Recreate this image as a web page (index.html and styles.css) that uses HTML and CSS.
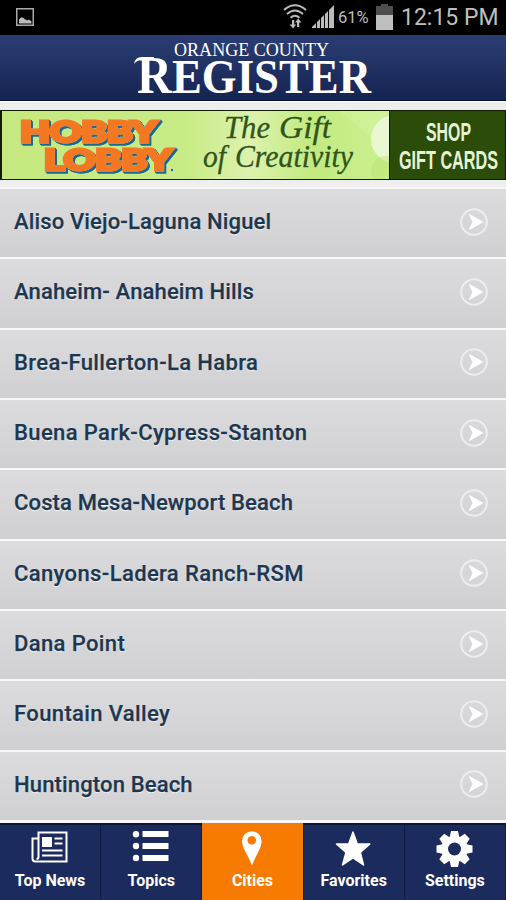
FILE: index.html
```
<!DOCTYPE html>
<html lang="en">
<head>
  <meta charset="UTF-8">
  <title>Orange County Register</title>
  <link rel="stylesheet" href="styles.css">
</head>
<body>
  <div class="status">
    <svg class="photo" width="18" height="18" viewBox="0 0 18 18">
      <rect x=".75" y=".75" width="16.5" height="16.5" fill="none" stroke="#aaa" stroke-width="1.5"/>
      <path d="M3 15.500v-4l2-2h2l2 2h1l1 1 2-1 2.500 2v2z" fill="#bbb"/>
    </svg>
    <svg class="wifi" width="24" height="26" viewBox="0 0 24 26">
      <path d="M1 6q11-9.500 22 0M4 10q8-7 16 0M7.500 13.700q4.500-4 9 0" fill="none" stroke="#bbb" stroke-width="2"/>
      <path d="M9 16h2.200v4.500h2l-3.200 4-3.500-4H9zM14 23v-4.500h-2l3.200-4 3.300 4h-2.300V23z" fill="#bbb"/>
    </svg>
    <svg class="signal" width="22" height="23" viewBox="0 0 22 23">
      <path d="M0 23v-1l4-4v5zM5 23v-6l3-3v9zM9 23v-10l3-3v13zM13 23V9l3-3v17zM17 23V5l5-5v23z" fill="#bbb"/>
    </svg>
    <span class="percent">61%</span>
    <svg class="battery" width="17" height="26" viewBox="0 0 17 26">
      <path d="M0 2h5V0h7v2h5v10H0z" fill="#4d4d4d"/>
      <path d="M0 11h17v15H0z" fill="#bebebe"/>
    </svg>
    <span class="time">12:15 PM</span>
  </div>

  <header class="header">
    <svg width="506" height="65" viewBox="0 0 506 65">
      <g class="logo">
        <text x="174" y="20.500" font-size="19" textLength="155" lengthAdjust="spacingAndGlyphs">ORANGE COUNTY</text>
        <text x="137" y="58" font-size="49" font-weight="bold" textLength="234" lengthAdjust="spacingAndGlyphs"><tspan font-size="53">R</tspan>EGISTER</text>
        <path d="M134 29q1-7 8-7h12v3h-12q-5 0-8 4z"/>
      </g>
    </svg>
  </header>

  <div class="ad">
    <svg width="506" height="70" viewBox="0 0 506 70">
      <defs>
        <linearGradient id="lime">
          <stop offset="0" stop-color="#c5e97e"/>
          <stop offset=".48" stop-color="#c9eb87"/>
          <stop offset=".64" stop-color="#dcf2ae"/>
          <stop offset=".8" stop-color="#c3ea80"/>
          <stop offset="1" stop-color="#cbf090"/>
        </linearGradient>
        <clipPath id="left"><path d="M2 1h387v68H2z"/></clipPath>
      </defs>
      <path d="M0 0h506v70H0z" fill="#111c05"/>
      <g clip-path="url(#left)">
        <path d="M2 1h387v68H2z" fill="url(#lime)"/>
        <path d="M340 1l49 42V1z" fill="#d5f3a2" opacity=".5"/>
        <circle cx="395" cy="29" r="24" fill="#e9f8d1"/>
        <circle cx="386" cy="61" r="15" fill="#b7e26c" opacity=".4"/>
      </g>
      <path d="M390 1h115v68H390z" fill="#2c4d0a"/>
      <g class="hobby">
        <text x="20" y="32" textLength="137" lengthAdjust="spacingAndGlyphs">HOBBY</text>
        <text x="44" y="59.500" textLength="128" lengthAdjust="spacingAndGlyphs">LOBBY</text>
      </g>
      <path d="M171 59h2v2h-2z" fill="#176a94"/>
      <g class="script">
        <text x="224" y="28" textLength="46" lengthAdjust="spacingAndGlyphs">The</text>
        <text x="279" y="28" textLength="52" lengthAdjust="spacingAndGlyphs">Gift</text>
        <text x="203" y="57" textLength="23" lengthAdjust="spacingAndGlyphs">of</text>
        <text x="235" y="57" textLength="118" lengthAdjust="spacingAndGlyphs">Creativity</text>
      </g>
      <g class="shop">
        <text x="426" y="31" textLength="45" lengthAdjust="spacingAndGlyphs">SHOP</text>
        <text x="399" y="59" textLength="99" lengthAdjust="spacingAndGlyphs">GIFT CARDS</text>
      </g>
    </svg>
  </div>

  <svg class="defs" width="0" height="0">
    <symbol id="arrow" viewBox="0 0 28 28">
      <circle cx="14" cy="14" r="12.800" fill="none" stroke="#ededee" stroke-width="2"/>
      <path d="M8.500 5.500l15 8.500-15 8.500 4-8.500z" fill="#fff"/>
    </symbol>
  </svg>

  <ul class="cities">
    <li><span>Aliso Viejo-Laguna Niguel</span><svg><use href="#arrow"/></svg></li>
    <li><span>Anaheim- Anaheim Hills</span><svg><use href="#arrow"/></svg></li>
    <li class="wide"><span>Brea-Fullerton-La Habra</span><svg><use href="#arrow"/></svg></li>
    <li class="wide"><span>Buena Park-Cypress-Stanton</span><svg><use href="#arrow"/></svg></li>
    <li><span>Costa Mesa-Newport Beach</span><svg><use href="#arrow"/></svg></li>
    <li class="wide"><span>Canyons-Ladera Ranch-RSM</span><svg><use href="#arrow"/></svg></li>
    <li class="wide"><span>Dana Point</span><svg><use href="#arrow"/></svg></li>
    <li class="wide"><span>Fountain Valley</span><svg><use href="#arrow"/></svg></li>
    <li><span>Huntington Beach</span><svg><use href="#arrow"/></svg></li>
  </ul>

  <nav class="tabs">
    <div class="tab">
      <svg width="38" height="36" viewBox="0 0 38 36">
        <path d="M7.500 1.500h28v29h-31q-3 0-3-3V7.500h6zM7.500 7v19q0 2-2 2" fill="none" stroke="#fff" stroke-width="2"/>
        <path d="M11 6h10v10H11zM23.500 6.500h8v2h-8zM23.500 11.500h8v2h-8zM11 18.500h20.500v2H11zM11 23.500h20.500v2H11z" fill="#fff"/>
      </svg>
      <span>Top News</span>
    </div>
    <div class="tab">
      <svg width="38" height="36" viewBox="0 0 38 36" fill="#fff">
        <circle cx="4" cy="3.200" r="3.200"/><circle cx="4" cy="15" r="3.200"/><circle cx="4" cy="27" r="3.200"/>
        <path d="M10.500 0h26v6h-26zM10.500 12h26v6h-26zM10.500 24h26v6h-26z"/>
      </svg>
      <span>Topics</span>
    </div>
    <div class="tab active">
      <svg width="38" height="36" viewBox="0 0 38 36">
        <path d="M19 34.500C16 26 9 17 9 10a9.800 9.800 0 0 1 19.600 0C28.600 17 22 26 19 34.500zM18.800 5a4.300 4.300 0 1 0 .01 0z" fill="#fff" fill-rule="evenodd"/>
      </svg>
      <span>Cities</span>
    </div>
    <div class="tab">
      <svg width="38" height="36" viewBox="0 0 38 36">
        <path d="M18 1l4.300 12h12.500l-9.500 8.500L28.500 34 18 27 7.500 34 11 21.500 1.500 13h12.200z" fill="#fff" stroke="#fff" stroke-width="1.500" stroke-linejoin="round"/>
      </svg>
      <span>Favorites</span>
    </div>
    <div class="tab">
      <svg width="38" height="36" viewBox="0 0 38 36">
        <g transform="translate(18.500 18)" fill="#fff">
          <g id="teeth">
            <path id="tooth" d="M-5-11l1.500-7h7L5-11v22l-1.500 7h-7L-5 11z"/>
            <use href="#tooth" transform="rotate(90)"/>
          </g>
          <use href="#teeth" transform="rotate(45)"/>
          <circle r="13"/>
          <circle r="6.500" fill="#1b2b5d"/>
        </g>
      </svg>
      <span>Settings</span>
    </div>
  </nav>
</body>
</html>
```
FILE: styles.css
```
body {
  margin: 0;
  width: 506px;
  height: 900px;
  display: flex;
  flex-direction: column;
  overflow: hidden;
  background: #eee;
  font-family: Roboto, "Liberation Sans", sans-serif;
}
svg {
  display: block;
  flex: none;
  overflow: visible;
}
.defs {
  position: absolute;
}

/* status bar */
.status {
  height: 35px;
  flex: none;
  display: flex;
  background: #000;
  color: #bebebe;
}
.photo {
  margin: 8px 249px 0 16px;
}
.wifi {
  margin-top: 4px;
}
.signal {
  margin: 5px 4px 0 5px;
}
.percent {
  width: 38px;
  font-size: 16.5px;
  line-height: 36px;
}
.battery {
  margin-top: 4px;
}
.time {
  margin-left: 8px;
  font-size: 23px;
  line-height: 35px;
  white-space: nowrap;
}

/* masthead */
.header {
  height: 65px;
  flex: none;
  background: linear-gradient(#2b3d74, #152451);
  border-bottom: 1px solid #050d38;
}
.logo {
  fill: #fff;
  font-family: "Liberation Serif", serif;
}

.ad {
  flex: none;
  padding: 8px 0 7px;
  border-top: 1px solid #fff;
}
.hobby {
  font: 900 28px Lato, sans-serif;
  fill: #f47721;
  stroke: #f47721;
  stroke-width: 3px;
  filter: drop-shadow(0 0 .5px #d9c7a0) drop-shadow(1px 1px 0 #176a94) drop-shadow(1px 1px 0 #176a94);
}
.script {
  font: italic 31px "Liberation Serif", serif;
  fill: #31541c;
  stroke: #31541c;
  stroke-width: .3px;
}
.shop {
  font: bold 26px "Liberation Sans", sans-serif;
  fill: #e6f2d4;
}

/* city list */
.cities {
  flex: 1;
  margin: 0;
  padding: 0;
  list-style: none;
  display: grid;
  grid-template-rows: repeat(9, 70.33px);
  background: linear-gradient(#f8f8f8, #f8f8f8) 0 100% / 100% 3px no-repeat;
}
.cities li {
  display: flex;
  align-items: center;
  justify-content: space-between;
  box-sizing: border-box;
  padding: 0 18px 3px 14px;
  border-top: 2px solid #f8f8f8;
  background: linear-gradient(#dcdcde, #d0d0d2);
  color: #1d374f;
  font-size: 22px;
  font-weight: 500;
  letter-spacing: .15px;
  text-shadow: 0 1px 1px #fff;
  -webkit-text-stroke: .25px #1d374f;
}
.cities .wide {
  letter-spacing: .38px;
}
.cities svg {
  width: 28px;
  height: 28px;
}

/* bottom tabs */
.tabs {
  height: 75px;
  flex: none;
  display: grid;
  grid-template-columns: repeat(5, 1fr);
  border-top: 2px solid #0d1638;
  background: #1b2b5d;
}
.tab {
  display: flex;
  flex-direction: column;
  align-items: center;
  box-sizing: border-box;
  padding-top: 6px;
  border-right: 1px solid #121d45;
  color: #fff;
  font-size: 16px;
  font-weight: 700;
}
.tab span {
  margin-top: 4px;
  line-height: 20px;
}
.active {
  margin-top: -2px;
  padding-top: 8px;
  background: #f77b00;
}
```
